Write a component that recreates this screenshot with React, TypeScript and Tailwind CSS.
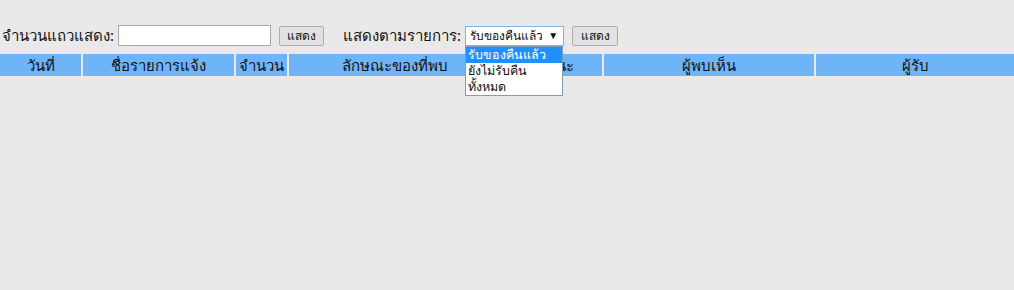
import React from "react";

const cols = [
  { label: "วันที่", w: "w-[81px]" },
  { label: "ชื่อรายการแจ้ง", w: "w-[151px]" },
  { label: "จำนวน", w: "w-[51px]" },
  { label: "ลักษณะของที่พบ", w: "w-[211px]" },
  { label: "สถานะ", w: "w-[100px]" },
  { label: "ผู้พบเห็น", w: "w-[210px]" },
  { label: "ผู้รับ", w: "flex-1" },
];

export default function App() {
  return (
    <div className="w-[1014px] h-[290px] bg-[#e9e9e9] text-[#111] overflow-hidden" style={{ fontFamily: "Tahoma, 'Noto Sans', 'Liberation Sans', sans-serif" }}>
      <div className="flex items-center h-[21px] mt-[25px] pl-[2px] text-[15px]">
        <span>จำนวนแถวแสดง:</span>
        <div className="ml-[4px] w-[153px] h-[21px] bg-white border border-[#a9a9a9]" />
        <button className="ml-[8px] w-[45px] h-[20px] bg-[#e1e1e1] border border-[#adadad] rounded-[2px] text-[12px] leading-none">แสดง</button>
        <span className="ml-[19px]">แสดงตามรายการ:</span>
        <div className="relative ml-[4px]">
          <div className="w-[99px] h-[20px] bg-white border border-[#7eb4ea] flex items-center justify-between pl-[4px] pr-[5px] text-[12px] whitespace-nowrap">
            <span>รับของคืนแล้ว</span>
            <span className="text-[10px]">▼</span>
          </div>
          <div className="absolute left-0 top-[20px] w-[98px] bg-white border border-[#7f9db9] text-[12.5px] leading-[16px] whitespace-nowrap z-10">
            <div className="bg-[#1e90ff] text-white pl-[2px]">รับของคืนแล้ว</div>
            <div className="pl-[2px]">ยังไม่รับคืน</div>
            <div className="pl-[2px]">ทั้งหมด</div>
          </div>
        </div>
        <button className="ml-[8px] w-[46px] h-[20px] bg-[#e1e1e1] border border-[#adadad] rounded-[2px] text-[12px] leading-none">แสดง</button>
      </div>
      <div className="flex gap-[2px] mt-[8px] h-[22px] text-[15px]">
        {cols.map((c) => (
          <div key={c.label} className={`${c.w} bg-[#70b4f8] flex items-center justify-center`}>
            {c.label}
          </div>
        ))}
      </div>
    </div>
  );
}
